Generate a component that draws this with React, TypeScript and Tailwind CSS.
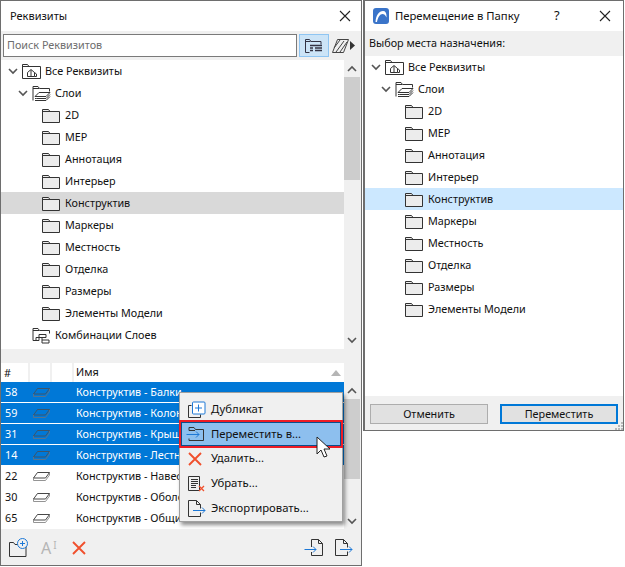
import { ReactNode } from 'react'

const folders = ['2D', 'MEP', 'Аннотация', 'Интерьер', 'Конструктив', 'Маркеры', 'Местность', 'Отделка', 'Размеры', 'Элементы Модели']

const rows = [
  { id: '58', name: 'Конструктив - Балки', selected: true },
  { id: '59', name: 'Конструктив - Колонны', selected: true },
  { id: '31', name: 'Конструктив - Крыши', selected: true },
  { id: '14', name: 'Конструктив - Лестницы', selected: true },
  { id: '22', name: 'Конструктив - Навесные', selected: false },
  { id: '30', name: 'Конструктив - Оболочки', selected: false },
  { id: '65', name: 'Конструктив - Общие', selected: false },
]

function Chevron() {
  return (
    <svg width="10" height="7" viewBox="0 0 10 7" fill="none" stroke="#555" strokeWidth="1.6" className="shrink-0">
      <path d="M1 1l4 4 4-4" />
    </svg>
  )
}

function FolderIcon() {
  return (
    <svg width="18" height="15" viewBox="0 0 18 15" className="shrink-0">
      <path d="M.5 14.5V1.5h6l1.5 2h9.500v11z" fill="#ececec" stroke="#333" />
      <path d="M.5 3.500h7.500" stroke="#333" fill="none" />
    </svg>
  )
}

function RootIcon() {
  return (
    <svg width="19" height="16" viewBox="0 0 19 16" className="shrink-0" fill="none" stroke="#333">
      <path d="M.5 15.500V1.500h5l1.500 2h11.500v12z" />
      <path d="M.5 3.500h7" />
      <path d="M5.500 13.500v-4l3.500-3 3.500 3v4zM9 7v6.500M12.500 9.500l2 1.500v2.500h-2" />
    </svg>
  )
}

function LayersIcon() {
  return (
    <svg width="19" height="17" viewBox="0 0 19 17" className="shrink-0" fill="none" stroke="#333">
      <path d="M1 15.500V1.500h5l1.500 2h10v3" />
      <path d="M1 3.500h6" />
      <path d="M3 11.500l4-4h11l-4 4z" fill="#fff" />
      <path d="M3 13.500l1.500 0h9.500l4-4M3 15.500h11l4-4" />
    </svg>
  )
}

function CombosIcon() {
  return (
    <svg width="19" height="17" viewBox="0 0 19 17" className="shrink-0" fill="none" stroke="#333">
      <path d="M1 13.500V1.500h5l1.500 2h10v3" />
      <path d="M1 3.500h6M1 13.500h3" />
      <path d="M7 7.500h7v3H7zM10 10.500v5.500h7v-3h-7M4 10.500h3v3H4z" />
    </svg>
  )
}

function Tree({ selectedClass, dialog }: { selectedClass: string; dialog?: boolean }) {
  return (
    <div>
      <div className={`flex h-[22px] items-center gap-[4px] ${dialog ? 'pl-[6px]' : 'pl-[7px]'}`}>
        <Chevron />
        <RootIcon />
        <span>Все Реквизиты</span>
      </div>
      <div className={`flex h-[22px] items-center gap-[4px] ${dialog ? 'pl-[16px]' : 'pl-[17px]'}`}>
        <Chevron />
        <LayersIcon />
        <span>Слои</span>
      </div>
      {folders.map((name) => (
        <div
          key={name}
          className={`flex h-[22px] items-center gap-[5px] ${dialog ? 'pl-[40px]' : 'pl-[41px]'} ${name === 'Конструктив' ? selectedClass : ''}`}
        >
          <FolderIcon />
          <span className="whitespace-nowrap">{name}</span>
        </div>
      ))}
      {!dialog && (
        <div className="flex h-[22px] items-center gap-[4px] pl-[31px]">
          <CombosIcon />
          <span>Комбинации Слоев</span>
        </div>
      )}
    </div>
  )
}

function CloseIcon() {
  return (
    <svg width="12" height="12" viewBox="0 0 12 12" stroke="#222" strokeWidth="1.100">
      <path d="M1 1l10 10M11 1L1 11" />
    </svg>
  )
}

function ScrollBar({ thumb }: { thumb: string }) {
  return (
    <div className="flex w-[16px] shrink-0 flex-col items-center bg-[#f0f0f0]">
      <div className="flex h-[17px] items-center">
        <svg width="10" height="7" viewBox="0 0 10 7" fill="none" stroke="#555" strokeWidth="1.600">
          <path d="M1 6l4-4 4 4" />
        </svg>
      </div>
      <div className="w-full flex-1">
        <div className={`w-full bg-[#cdcdcd] ${thumb}`} />
      </div>
      <div className="flex h-[17px] items-center">
        <Chevron />
      </div>
    </div>
  )
}

function LayerGlyph({ light }: { light: boolean }) {
  return (
    <svg width="17" height="9" viewBox="0 0 17 9" fill="none" strokeWidth="0.900">
      <path d="M.5 6l4-5.500h12l-4 5.500z" stroke={light ? '#44515e' : '#333'} fill={light ? 'none' : '#fff'} />
      <path d="M.5 6v2.500h12l4-5.500v-2" stroke={light ? '#5f7488' : '#888'} />
    </svg>
  )
}

function ResourceTable() {
  return (
    <div className="flex w-[343px] flex-col">
      <div className="flex h-[19px] shrink-0 items-center bg-white">
        <span className="w-[29px] border-r-2 border-[#f0f0f0] pl-[3px] leading-[19px]">#</span>
        <span className="h-full w-[22px] border-r-2 border-[#f0f0f0]" />
        <span className="h-full w-[22px] border-r-2 border-[#f0f0f0]" />
        <span className="flex-1 pl-[2px]">Имя</span>
        <svg width="10" height="6" viewBox="0 0 10 6" className="mr-[3px]">
          <path d="M0 6l5-6 5 6z" fill="#b5b5b5" />
        </svg>
      </div>
      {rows.map((row) => (
        <div
          key={row.id}
          className={`flex h-[21px] shrink-0 items-center border-b border-white ${row.selected ? 'bg-[#0078d7] text-white' : 'bg-white'}`}
        >
          <span className="w-[32px] pl-[4px]">{row.id}</span>
          <span className="flex w-[43px]">
            <LayerGlyph light={row.selected} />
          </span>
          <span className="whitespace-nowrap">{row.name}</span>
        </div>
      ))}
    </div>
  )
}

function DuplicateIcon() {
  return (
    <svg width="18" height="17" viewBox="0 0 18 17" fill="none" stroke="#333">
      <path d="M3.500 4.500h-3v12h12v-3" />
      <rect x="4.500" y="1" width="12.500" height="12" rx="1" stroke="#1d78d6" fill="#fff" />
      <path d="M10.500 3.500v7M7 7h7" stroke="#1d78d6" />
    </svg>
  )
}

function MoveIcon() {
  return (
    <svg width="20" height="16" viewBox="0 0 20 16" fill="none" stroke="#333" className="-ml-[2px]">
      <path d="M3 4.500V1.500h5l1.500 2h8v11H3v-2" />
      <path d="M3 4.500h6" />
      <path d="M.5 8.500H13M10 5.500l3 3-3 3" stroke="#1d78d6" />
    </svg>
  )
}

function RedCross() {
  return (
    <svg width="14" height="14" viewBox="0 0 14 14" stroke="#f0502d" strokeWidth="1.900">
      <path d="M1 1l12 12M13 1L1 13" />
    </svg>
  )
}

function RemoveIcon() {
  return (
    <svg width="17" height="16" viewBox="0 0 17 16" fill="none">
      <path d="M.5.500h11v14H.5z" stroke="#333" />
      <path d="M3 3.500h7M3 5.500h7M3 7.500h7M3 9.500h5M3 11.500h5" stroke="#333" />
      <path d="M11 10l5 5M16 10l-5 5" stroke="#f0502d" strokeWidth="1.300" />
    </svg>
  )
}

function ExportIcon() {
  return (
    <svg width="18" height="17" viewBox="0 0 18 17" fill="none">
      <path d="M.5 16.500V.5h8l4 4v4M12.500 12.500v4H.5M8.500.5v4h4" stroke="#333" />
      <path d="M5 10.500h12M14 7.500l3 3-3 3" stroke="#1d78d6" />
    </svg>
  )
}

function ImportIcon() {
  return (
    <svg width="20" height="17" viewBox="0 0 20 17" fill="none">
      <path d="M7.500 8V.5h7l4 4v12h-11V13M14.500.5v4h4" stroke="#333" />
      <path d="M.5 10.500H12M9 7.500l3 3-3 3" stroke="#1d78d6" />
    </svg>
  )
}

function MenuRow({ icon, label, active }: { icon: ReactNode; label: string; active?: boolean }) {
  return (
    <div
      className={`flex items-center ${active ? 'mx-[1px] h-[24px] border border-[#0a4f8c] bg-[#8dbfee] pl-[6px] outline-2 outline-[#ee1c25]' : 'h-[25px] pl-[8px]'}`}
    >
      <span className="flex w-[18px]">{icon}</span>
      <span className="ml-[5px] whitespace-nowrap">{label}</span>
    </div>
  )
}

function ContextMenu() {
  return (
    <div className="absolute left-[179px] top-[392px] w-[164px] border border-[#a0a0a0] bg-[#f0f0f0] pt-[4px] text-[11.3px] text-[#111] shadow-[2px_3px_4px_rgba(0,0,0,0.45)]">
      <MenuRow icon={<DuplicateIcon />} label="Дубликат" />
      <MenuRow active icon={<MoveIcon />} label="Переместить в..." />
      <MenuRow icon={<RedCross />} label="Удалить..." />
      <MenuRow icon={<RemoveIcon />} label="Убрать..." />
      <MenuRow icon={<ExportIcon />} label="Экспортировать..." />
      <svg width="17" height="24" viewBox="0 0 17 24" className="absolute left-[136px] top-[43px]">
        <path d="M1 1v17l4-4 3 7 3-1-3-7h6z" fill="#fff" stroke="#222" />
      </svg>
    </div>
  )
}

export default function App() {
  return (
    <div
      className="relative flex h-[567px] w-[625px] items-start bg-white text-[10.8px] text-[#111]"
      style={{ fontFamily: '"Noto Sans", "Open Sans", sans-serif' }}
    >
      {/* resources palette */}
      <div className="flex h-[566px] w-[362px] shrink-0 flex-col border border-[#6e6e6e] bg-[#f0f0f0]">
        <div className="flex h-[30px] shrink-0 items-center justify-between bg-white pl-[9px] pr-[10px] text-[11px]">
          <span>Реквизиты</span>
          <CloseIcon />
        </div>
        <div className="flex h-[29px] shrink-0 items-center pl-[2px]">
          <div className="flex h-[23px] w-[294px] items-center border border-[#7a7a7a] bg-white pl-[3px] text-[#6d6d6d]">
            Поиск Реквизитов
          </div>
          <div className="ml-[2px] flex h-[23px] w-[30px] items-center justify-center border border-[#8fc5f2] bg-[#cce4f7]">
            <svg width="18" height="14" viewBox="0 0 18 14" fill="none" stroke="#334">
              <path d="M.5 13.500V.5h4l1.500 2h10v3" />
              <path d="M.5 2.500h5M.5 13.500h4" />
              <path d="M5 6.500h12M5 9h3M10 9h7M5 11.500h3M10 11.500h7" strokeWidth="1.500" />
            </svg>
          </div>
          <div className="ml-[3px] flex items-center">
            <svg width="17" height="14" viewBox="0 0 17 14" fill="none" stroke="#444">
              <path d="M.5 13.500l5-13h11l-5 13zM2 9l6-8M4 13l8-11M8 13l7-10" />
            </svg>
            <svg width="5" height="9" viewBox="0 0 5 9" className="ml-[1px]">
              <path d="M0 0l5 4.500L0 9z" fill="#333" />
            </svg>
          </div>
        </div>
        <div className="flex h-[289px] shrink-0">
          <div className="w-[343px] bg-white">
            <Tree selectedClass="bg-[#d9d9d9]" />
          </div>
          <ScrollBar thumb="h-[103px]" />
        </div>
        <div className="h-[14px] shrink-0" />
        <div className="flex h-[167px] shrink-0">
          <ResourceTable />
          <div className="mt-[19px] flex">
            <ScrollBar thumb="h-[80px]" />
          </div>
        </div>
        <div className="flex flex-1 items-center justify-between px-[8px]">
          <div className="flex items-center gap-[12px]">
            <svg width="20" height="19" viewBox="0 0 20 19" fill="none">
              <path d="M.5 18.500V4.500h4l1.500 2h11v12z" stroke="#333" />
              <circle cx="13.500" cy="5.500" r="5" stroke="#1d78d6" fill="#f0f0f0" />
              <path d="M13.500 3v5M11 5.500h5" stroke="#1d78d6" />
            </svg>
            <span className="flex w-[19px] items-start whitespace-nowrap text-[16px] leading-none text-[#b5b5b5]">
              A<span className="ml-[2px] text-[10px] leading-none">I</span>
            </span>
            <RedCross />
          </div>
          <div className="flex items-center gap-[11px]">
            <ImportIcon />
            <ExportIcon />
          </div>
        </div>
      </div>

      {/* move to folder dialog */}
      <div className="ml-[1px] flex h-[431px] w-[261px] shrink-0 flex-col border-y border-r border-l-2 border-[#6e6e6e] bg-[#f0f0f0]">
        <div className="flex h-[30px] shrink-0 items-center bg-white pl-[8px] text-[11.3px]">
          <svg width="16" height="16" viewBox="0 0 16 16">
            <rect width="16" height="16" rx="3" fill="#3a74c9" />
            <path d="M2.500 14C3 7 6 3 10 3c2.500 0 3.500 2 3.500 5v1.500C12.500 7 11 6 9.500 6 7 6 5 9 4 14z" fill="#fff" />
          </svg>
          <span className="ml-[6px] w-[159px] whitespace-nowrap">Перемещение в Папку</span>
          <span className="w-[45px] text-[13px]">?</span>
          <CloseIcon />
        </div>
        <div className="flex h-[25px] shrink-0 items-center pl-[4px]">Выбор места назначения:</div>
        <div className="h-[340px] shrink-0 bg-white">
          <Tree selectedClass="bg-[#cce8ff]" dialog />
        </div>
        <div className="relative flex flex-1 items-start gap-[12px] pl-[5px] pt-[8px]">
          <button className="h-[20px] w-[118px] border border-[#adadad] bg-[#e1e1e1]">Отменить</button>
          <button className="h-[20px] w-[118px] border-2 border-[#0078d7] bg-[#e1e1e1]">Переместить</button>
          {/* resize grip */}
          <svg width="8" height="8" viewBox="0 0 8 8" className="absolute bottom-0 right-0" fill="#b8b8b8">
            <path d="M6 0h2v2H6zM3 3h2v2H3zM6 3h2v2H6zM0 6h2v2H0zM3 6h2v2H3zM6 6h2v2H6z" />
          </svg>
        </div>
      </div>

      <ContextMenu />
    </div>
  )
}
